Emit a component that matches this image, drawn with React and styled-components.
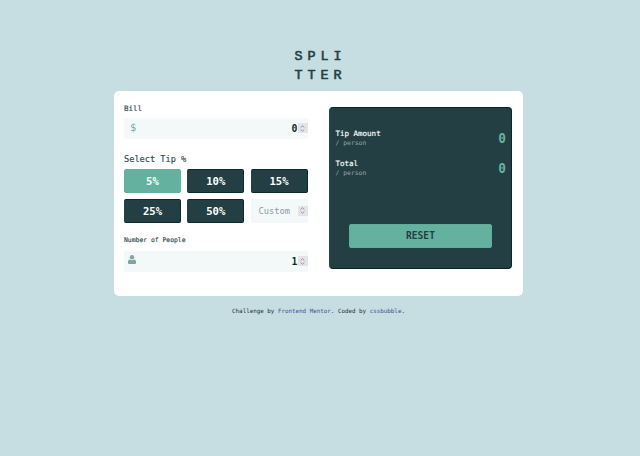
import React from "react";
import styled, { createGlobalStyle } from "styled-components";

const GlobalStyle = createGlobalStyle`
  * { box-sizing: border-box; }
  html, body { margin: 0; min-height: 100%; background: #c6dee2; }
  body { font-family: "DejaVu Sans Mono", monospace; color: #223f43; }
  button { font-family: inherit; padding: 0; margin: 0; }
`;

const Page = styled.main`
  display: flex;
  flex-direction: column;
  align-items: center;
  min-height: 456px;
  padding-top: 47px;
`;

const Logo = styled.h1`
  margin: 0 0 5px;
  padding-left: 2.5px;
  width: 56px;
  height: 39px;
  font: 400 13.4px/19.4px "Liberation Mono", monospace;
  letter-spacing: 5px;
  white-space: nowrap;
  -webkit-text-stroke: 0.6px currentColor;
`;

const Card = styled.section`
  display: flex;
  justify-content: space-between;
  width: 409px;
  height: 204.5px;
  margin-left: -3px;
  padding: 9.5px 11px 0 10px;
  border-radius: 5px;
  background: #fff;
`;

const Form = styled.div`
  display: flex;
  flex-direction: column;
  width: 183.5px;
`;

const Label = styled.label`
  height: ${(p) => p.$height}px;
  padding-top: ${(p) => p.$top}px;
  color: #2e4a4e;
  font-size: ${(p) => p.$size}px;
  line-height: 10px;
  -webkit-text-stroke: 0.15px currentColor;
`;

const Field = styled.div`
  display: flex;
  align-items: center;
  height: 21.5px;
  padding-left: 4px;
  border-radius: 2px;
  background: #f3f9f9;
`;

const FieldIcon = styled.svg`
  flex: none;
  width: 8px;
  height: 9px;
  margin: -4px auto 0 0;
  fill: #7fa3a4;
`;

const Dollar = styled.span`
  margin: -3px auto 0 2px;
  font-size: 10.4px;
  color: #82a5a8;
`;

const Value = styled.span`
  font-size: 9.8px;
  font-weight: 700;
  color: #0e292e;
`;

const Spinner = styled.span`
  display: flex;
  align-items: center;
  justify-content: center;
  width: 10px;
  height: 10px;
  background: #e5e3e7;
  svg { width: 5px; height: 7px; fill: none; stroke: #8e8c93; stroke-width: 0.9; }
`;

const Tips = styled.div`
  display: grid;
  grid-template-columns: repeat(3, 57px);
  grid-auto-rows: 23.5px;
  gap: 6.5px 6.25px;
`;

const Tip = styled.button`
  border: 1px solid ${(p) => (p.$active ? "#65b1a0" : "#0d2930")};
  border-left-color: ${(p) => (p.$active ? "#65b1a0" : "#244247")};
  border-radius: 2px;
  background: ${(p) => (p.$active ? "#65b1a0" : "#233f43")};
  color: #fff;
  font-size: 10.6px;
  line-height: 20px;
  font-weight: 700;
`;

const Custom = styled.div`
  display: flex;
  align-items: center;
  justify-content: space-between;
  padding-left: 8px;
  border-radius: 2px;
  background: #f3f9f9;
  color: #8e989f;
  font-size: 8.7px;
`;

const Results = styled.div`
  display: flex;
  flex-direction: column;
  width: 183px;
  height: 162px;
  margin-top: 6px;
  padding: 21px 5px 0 5.5px;
  border: 1px solid #0b242b;
  border-left-color: #28474b;
  border-radius: 4px;
  background: #233f43;
`;

const Result = styled.div`
  display: flex;
  justify-content: space-between;
  height: 30px;
`;

const ResultName = styled.div`
  color: #fff;
  font-size: 7.5px;
  line-height: 10px;
  -webkit-text-stroke: 0.15px currentColor;
  small {
    display: block;
    color: #98a5ab;
    font-size: 6.4px;
    line-height: 9px;
    -webkit-text-stroke: 0;
  }
`;

const Amount = styled.strong`
  padding-top: 1.5px;
  color: #65b1a0;
  font-size: 12.8px;
  line-height: 15px;
  transform: scaleY(1.14);
`;

const Reset = styled.button`
  width: 143px;
  height: 24px;
  margin: 35px auto 0 13.5px;
  border: 1px solid #60ac9b;
  border-radius: 2px;
  background: #65b1a0;
  color: #223f43;
  font-size: 9.6px;
  font-weight: 700;
`;

const Footer = styled.footer`
  margin: 10px 3px 0 0;
  font-size: 5.87px;
  line-height: 10px;
  color: #223238;
  white-space: nowrap;
  a { color: #3e4f96; }
`;

const Stepper = () => (
  <Spinner>
    <svg viewBox="0 0 5 7">
      <path d="M.7 2.4 2.5.8l1.8 1.6M.7 4.6l1.800 1.600 1.800-1.600" />
    </svg>
  </Spinner>
);

const RATES = [5, 10, 15, 25, 50];

export default function App() {
  return (
    <>
      <GlobalStyle />
      <Page>
        <Logo>SPLI<br />TTER</Logo>
        <Card>
          <Form>
            <Label $size={7.5} $top={3.5} $height={17}>Bill</Label>
            <Field>
              <Dollar>$</Dollar>
              <Value>0</Value>
              <Stepper />
            </Field>
            <Label $size={8.65} $top={14.5} $height={30}>Select Tip %</Label>
            <Tips>
              {RATES.map((rate) => (
                <Tip key={rate} $active={rate === 5}>{rate}%</Tip>
              ))}
              <Custom>Custom<Stepper /></Custom>
            </Tips>
            <Label $size={6.4} $top={12.3} $height={28}>Number of People</Label>
            <Field>
              <FieldIcon viewBox="0 0 8 9">
                <circle cx="4" cy="2.3" r="2.2" />
                <path d="M1.700 4.400Q4 6 6.300 4.400 8 4.700 8 6.300v1.700q0 1-1 1H1Q0 9 0 8V6.300Q0 4.700 1.700 4.400Z" />
              </FieldIcon>
              <Value>1</Value>
              <Stepper />
            </Field>
          </Form>
          <Results>
            <Result>
              <ResultName>Tip Amount<small>/ person</small></ResultName>
              <Amount>0</Amount>
            </Result>
            <Result>
              <ResultName>Total<small>/ person</small></ResultName>
              <Amount>0</Amount>
            </Result>
            <Reset>RESET</Reset>
          </Results>
        </Card>
        <Footer>
          Challenge by <a>Frontend Mentor</a>. Coded by <a>cssbubble</a>.
        </Footer>
      </Page>
    </>
  );
}
